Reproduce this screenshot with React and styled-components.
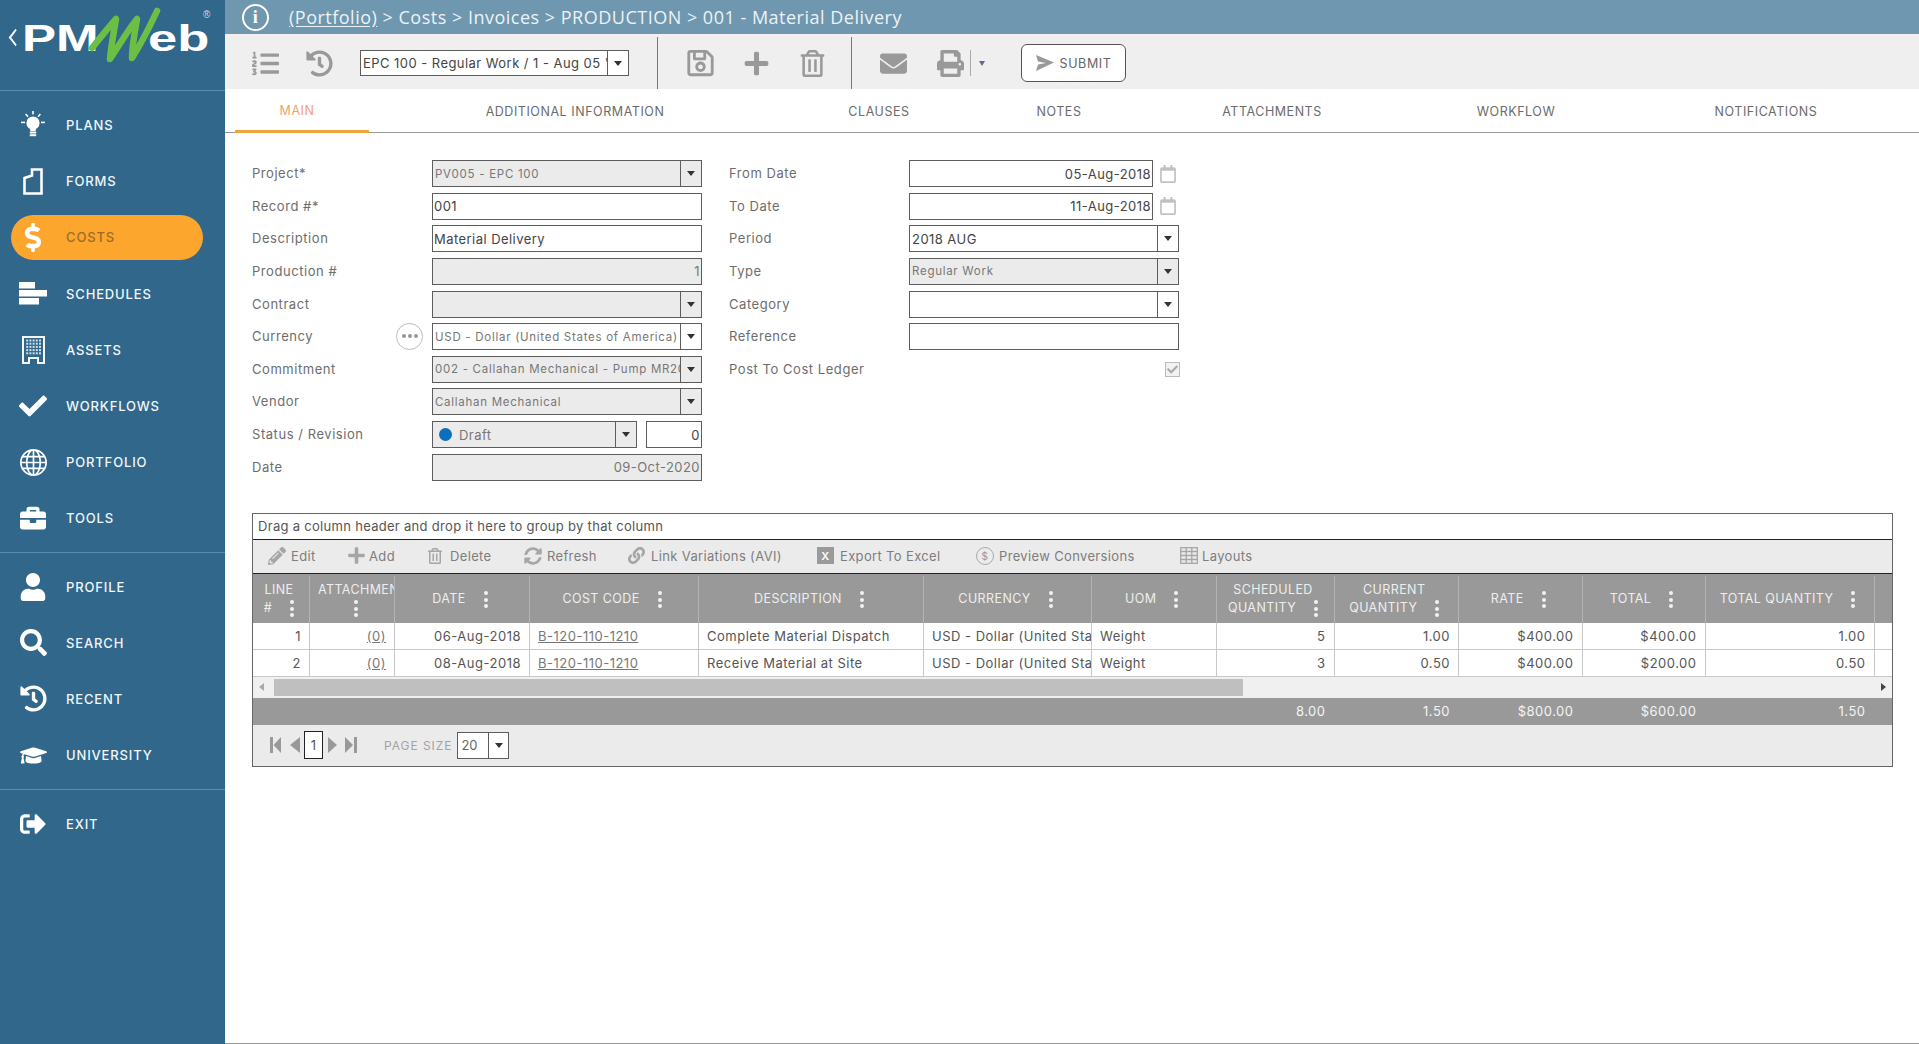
import React from "react";
import styled, { createGlobalStyle } from "styled-components";
import {
  FaCheck,
  FaDollarSign,
  FaBriefcase,
  FaUser,
  FaSearch,
  FaHistory,
  FaGraduationCap,
  FaSignOutAlt,
  FaListOl,
  FaRegSave,
  FaPlus,
  FaRegTrashAlt,
  FaEnvelope,
  FaPrint,
  FaPencilAlt,
  FaSyncAlt,
  FaLink,
  FaRegCalendar,
} from "react-icons/fa";
import { BsGlobe } from "react-icons/bs";

const COLUMNS = "56px 85px 135px 169px 225px 168px 124.5px 118px 124.5px 123.5px 123px 169px 1fr";

const GlobalStyle = createGlobalStyle`
  html, body {
    margin: 0;
    padding: 0;
    height: 100%;
    background: #fff;
    font-family: "Inter", "Noto Sans", sans-serif;
  }
  * {
    box-sizing: border-box;
  }
`;

const Page = styled.div`
  display: flex;
  width: 100%;
  height: 100vh;
  overflow: hidden;
`;

const Sidebar = styled.nav`
  width: 225px;
  flex-shrink: 0;
  background: #30678b;
  color: #fff;
  display: flex;
  flex-direction: column;
`;

const LogoBox = styled.div`
  height: 91px;
  border-bottom: 1px solid #5a8cab;
  position: relative;
`;

const LogoText = styled.div`
  position: absolute;
  top: 14px;
  font-family: "Liberation Sans", sans-serif;
  font-weight: 700;
  font-size: 36px;
  line-height: 50px;
  transform-origin: left center;
  transform: scaleX(${({ $sx }) => $sx});
  left: ${({ $left }) => $left}px;
`;

const LogoChevron = styled.div`
  position: absolute;
  left: 10px;
  top: 32px;
  width: 11px;
  height: 11px;
  border-left: 2px solid #fff;
  border-bottom: 2px solid #fff;
  transform: rotate(45deg) skew(8deg, 8deg);
`;

const LogoMark = styled.svg`
  position: absolute;
  left: 0;
  top: 0;
`;

const Registered = styled.span`
  position: absolute;
  left: 203px;
  top: 9px;
  font-size: 10px;
  font-family: "Liberation Sans", sans-serif;
  color: #cfdde6;
`;

const NavGroup = styled.div`
  padding: ${({ $top }) => $top}px 0 ${({ $bottom }) => $bottom}px;
  border-bottom: ${({ $line }) => ($line ? "1px solid #5a8cab" : "none")};
`;

const NavRow = styled.div`
  height: 56.2px;
  display: flex;
  align-items: center;
`;

const NavItem = styled.a`
  flex: 1;
  height: 45px;
  margin: 0 22px 0 11px;
  padding-left: 8px;
  border-radius: 23px;
  display: flex;
  align-items: center;
  gap: 19px;
  font-size: 13px;
  font-weight: 500;
  letter-spacing: 0.85px;
  color: ${({ $active }) => ($active ? "#9c6b2b" : "#f2f6f9")};
  background: ${({ $active }) => ($active ? "#fda62d" : "transparent")};
`;

const NavIcon = styled.span`
  width: 28px;
  height: 30px;
  display: flex;
  align-items: center;
  justify-content: center;
  color: #fff;
  font-size: ${({ $size }) => $size || 26}px;
`;

const Main = styled.main`
  flex: 1;
  min-width: 0;
  display: flex;
  flex-direction: column;
  border-bottom: 1px solid #999;
`;

const TopBar = styled.header`
  height: 34px;
  background: #6f97af;
  color: #edf2f5;
  display: flex;
  align-items: center;
  padding-left: 17px;
  gap: 20px;
  font-family: "Open Sans", sans-serif;
  font-size: 18px;
  letter-spacing: 0.5px;
`;

const InfoCircle = styled.span`
  width: 27px;
  height: 27px;
  border: 2.5px solid #fff;
  border-radius: 50%;
  color: #fff;
  font-family: "Liberation Serif", serif;
  font-weight: 700;
  font-size: 18px;
  display: flex;
  align-items: center;
  justify-content: center;
`;

const Crumbs = styled.div`
  white-space: nowrap;
  & u {
    text-underline-offset: 2px;
  }
`;

const ToolBar = styled.div`
  height: 55px;
  background: #efefef;
  border-top: 3px solid #f4eeee;
  display: flex;
  align-items: center;
  padding-left: 27px;
`;

const ToolGroup = styled.div`
  display: flex;
  align-items: center;
  gap: ${({ $gap }) => $gap || 29}px;
  padding: 0 ${({ $right }) => $right}px 0 ${({ $left }) => $left}px;
  align-self: stretch;
  border-right: ${({ $line }) => ($line ? "1px solid #777" : "none")};
`;

const ToolIcon = styled.span`
  width: 27px;
  display: flex;
  justify-content: center;
  color: #999;
  font-size: ${({ $size }) => $size || 27}px;
`;

const PlainField = styled.div`
  height: ${({ $h }) => $h || 27}px;
  width: ${({ $w }) => ($w ? `${$w}px` : "100%")};
  border: 1px solid #5d5d5d;
  background: ${({ $off }) => ($off ? "#ebebeb" : "#fff")};
  color: ${({ $off, $soft }) => ($off || $soft ? "#777" : "#444")};
  font-size: ${({ $small }) => ($small ? 11.5 : 13)}px;
  letter-spacing: ${({ $small }) => ($small ? 0.72 : 0.45)}px;
  display: flex;
  align-items: center;
  justify-content: ${({ $right }) => ($right ? "flex-end" : "flex-start")};
  padding: 0 1px;
  white-space: nowrap;
  overflow: hidden;
`;

const FieldText = styled.span`
  flex: 1;
  min-width: 0;
  overflow: hidden;
  display: flex;
  align-items: center;
  padding-left: 1px;
`;

const ArrowBox = styled.span`
  width: 21px;
  height: 100%;
  flex-shrink: 0;
  border-left: 1px solid #5d5d5d;
  display: flex;
  align-items: center;
  justify-content: center;
  margin-right: -1px;
  &::after {
    content: "";
    border-left: 4px solid transparent;
    border-right: 4px solid transparent;
    border-top: 5px solid #333;
  }
`;

const StatusDot = styled.span`
  width: 13px;
  height: 13px;
  border-radius: 50%;
  background: #0a6fbd;
  margin: 0 7px 0 4px;
  flex-shrink: 0;
`;

const SubmitButton = styled.button`
  width: 105px;
  height: 38px;
  margin-left: 36px;
  border: 1px solid #555;
  border-radius: 6px;
  background: #fff;
  color: #666;
  font-family: inherit;
  font-size: 12.5px;
  letter-spacing: 0.6px;
  display: flex;
  align-items: center;
  justify-content: center;
  gap: 6px;
`;

const DropTick = styled.span`
  margin-left: 6px;
  padding-left: 8px;
  height: 26px;
  border-left: 1px solid #aaa;
  display: flex;
  align-items: center;
  &::after {
    content: "";
    border-left: 3.5px solid transparent;
    border-right: 3.5px solid transparent;
    border-top: 5px solid #5a6a9a;
  }
`;

const Tabs = styled.div`
  height: 44px;
  display: flex;
  padding-left: 10px;
  border-bottom: 1px solid #999;
`;

const Tab = styled.div`
  width: ${({ $w }) => $w}px;
  height: 44px;
  display: flex;
  align-items: center;
  justify-content: center;
  padding-right: ${({ $active }) => ($active ? 10 : 0)}px;
  padding-top: ${({ $active }) => ($active ? 2 : 0)}px;
  font-size: 12.5px;
  letter-spacing: 0.55px;
  color: ${({ $active }) => ($active ? "#ef9f72" : "#6b6b6b")};
  border-bottom: ${({ $active }) => ($active ? "3px solid #f2a33c" : "none")};
`;

const Content = styled.div`
  flex: 1;
  padding: 27px 26px 0 27px;
`;

const Form = styled.div`
  display: flex;
  gap: 27px;
`;

const FormColumn = styled.div`
  display: grid;
  grid-template-columns: 180px 270px;
  grid-auto-rows: 27px;
  row-gap: 5.65px;
  align-content: start;
`;

const Label = styled.div`
  font-size: 13px;
  letter-spacing: 0.55px;
  color: #6d6d6d;
  padding-bottom: 1px;
  display: flex;
  align-items: center;
  justify-content: space-between;
`;

const MoreButton = styled.span`
  width: 27px;
  height: 27px;
  margin-right: 9px;
  border: 1.5px solid #bbb;
  border-radius: 50%;
  display: flex;
  align-items: center;
  justify-content: center;
  gap: 2px;
  & i {
    width: 4px;
    height: 4px;
    border-radius: 50%;
    background: #999;
  }
`;

const SplitCell = styled.div`
  display: flex;
  justify-content: space-between;
`;

const DateCell = styled.div`
  display: flex;
  justify-content: space-between;
  align-items: center;
  padding-right: 2px;
  color: #c2c2c2;
  font-size: 18px;
`;

const CheckBox = styled.span`
  width: 15px;
  height: 15px;
  margin-right: -1px;
  border: 1px solid #bbb;
  background: #f2f2f2;
  color: #aaa;
  font-size: 11px;
  display: flex;
  align-items: center;
  justify-content: center;
`;

const CheckCell = styled.div`
  display: flex;
  align-items: center;
  justify-content: flex-end;
`;

const DataGrid = styled.section`
  margin-top: 32px;
  border: 1px solid #666;
  background: #ebebeb;
`;

const GroupBar = styled.div`
  height: 26px;
  background: #fff;
  border-bottom: 1px solid #222;
  padding-left: 5px;
  display: flex;
  align-items: center;
  font-size: 13px;
  letter-spacing: 0.3px;
  color: #555;
`;

const GridTools = styled.div`
  height: 34px;
  padding: 0 0 1px 15px;
  border-bottom: 1px solid #222;
  display: flex;
  align-items: center;
`;

const GridTool = styled.div`
  width: ${({ $w }) => $w}px;
  display: flex;
  align-items: center;
  gap: ${({ $gap }) => $gap}px;
  color: #7d7d7d;
  font-size: 13px;
  letter-spacing: 0.35px;
  white-space: nowrap;
`;

const GridToolIcon = styled.span`
  display: flex;
  align-items: center;
  color: #a6a6a6;
  font-size: ${({ $size }) => $size || 16}px;
`;

const ExcelBadge = styled.span`
  width: 17px;
  height: 17px;
  background: #9a9a9a;
  color: #fff;
  font-size: 11px;
  font-weight: 600;
  display: flex;
  align-items: center;
  justify-content: center;
`;

const CoinBadge = styled.span`
  width: 18px;
  height: 18px;
  border: 1.5px solid #aaa;
  border-radius: 50%;
  color: #999;
  font-size: 10px;
  display: flex;
  align-items: center;
  justify-content: center;
`;

const HeadRow = styled.div`
  display: grid;
  grid-template-columns: ${COLUMNS};
  height: 49px;
  background: #999;
  color: #eee;
  font-size: 12.5px;
  letter-spacing: 0.4px;
`;

const HeadCell = styled.div`
  border-left: ${({ $first }) => ($first ? "none" : "1px solid #b3b3b3")};
  margin-top: 2px;
  line-height: 18px;
  text-align: center;
  padding: 0 ${({ $clip }) => ($clip ? 0 : 4)}px 0 ${({ $clip }) => ($clip ? 8 : 0)}px;
  display: flex;
  flex-direction: column;
  justify-content: center;
  overflow: hidden;
  white-space: nowrap;
`;

const ClipLine = styled.div`
  text-align: left;
  overflow: hidden;
`;

const Kebab = styled.span`
  display: inline-flex;
  flex-direction: column;
  gap: 2.5px;
  margin-left: ${({ $solo }) => ($solo ? 0 : 18)}px;
  vertical-align: middle;
  & i {
    width: 4px;
    height: 4px;
    border-radius: 50%;
    background: #f2f2f2;
  }
`;

const BodyRow = styled.div`
  display: grid;
  grid-template-columns: ${COLUMNS};
  height: 27px;
  background: #fff;
  border-bottom: 1px solid #c8c8c8;
  color: #555;
  font-size: 13px;
  letter-spacing: 0.5px;
`;

const BodyCell = styled.div`
  border-left: ${({ $first }) => ($first ? "none" : "1px solid #c8c8c8")};
  display: flex;
  align-items: center;
  justify-content: ${({ $right }) => ($right ? "flex-end" : "flex-start")};
  padding: 0 ${({ $right }) => ($right ? 8 : 0)}px 0 ${({ $right }) => ($right ? 0 : 8)}px;
  overflow: hidden;
  white-space: nowrap;
  & u {
    color: #777;
  }
`;

const ScrollRow = styled.div`
  height: 21px;
  background: #f0f0f0;
  display: flex;
  align-items: center;
  padding: 0 6px;
`;

const ScrollArrow = styled.span`
  width: 0;
  height: 0;
  border-top: 4px solid transparent;
  border-bottom: 4px solid transparent;
  border-left: ${({ $dir }) => ($dir === "right" ? "5px solid #444" : "none")};
  border-right: ${({ $dir }) => ($dir === "left" ? "5px solid #aaa" : "none")};
`;

const ScrollThumb = styled.span`
  width: 969px;
  height: 17px;
  margin: 0 auto 0 10px;
  background: #bfbfbf;
`;

const SumRow = styled.div`
  display: grid;
  grid-template-columns: ${COLUMNS};
  height: 27px;
  background: #999;
  color: #f4f4f4;
  font-size: 13px;
  letter-spacing: 0.5px;
`;

const SumCell = styled.div`
  display: flex;
  align-items: center;
  justify-content: flex-end;
  padding-right: 8px;
`;

const Pager = styled.div`
  height: 41px;
  display: flex;
  align-items: center;
  padding-left: 17px;
  color: #888;
`;

const PagerIcon = styled.svg`
  display: block;
  margin-right: ${({ $gap }) => $gap}px;
`;

const PageBox = styled.span`
  width: 19px;
  height: 28px;
  margin-right: 5px;
  border: 1px solid #222;
  background: #fff;
  color: #555;
  font-size: 13px;
  display: flex;
  align-items: center;
  justify-content: center;
`;

const PageSizeLabel = styled.span`
  margin: 0 5px 0 27px;
  font-size: 12px;
  letter-spacing: 0.95px;
  color: #a3a3a3;
  white-space: nowrap;
`;

const PageSize = styled.div`
  width: 52px;
  height: 27px;
  border: 1px solid #5d5d5d;
  background: #fff;
  color: #666;
  font-size: 13px;
  display: flex;
  align-items: center;
  padding-left: 2px;
`;

const Bulb = () => (
  <svg width="30" height="32" viewBox="0 0 28 30" fill="#fff">
    <circle cx="14" cy="13" r="6.6" />
    <path d="M10.5 17h7l-1 4h-5z" />
    <rect x="10.8" y="21.5" width="6.4" height="2" />
    <rect x="10.8" y="24.2" width="6.4" height="2" />
    <rect x="13.2" y="1" width="1.6" height="3.4" />
    <rect x="2" y="11.6" width="4" height="1.6" />
    <rect x="22" y="11.6" width="4" height="1.6" />
    <path d="M6 4.5l1.2-1 2.4 2.8-1.2 1zM22 4.5l-1.2-1-2.4 2.8 1.2 1z" />
  </svg>
);

const FormsIcon = () => (
  <svg width="20" height="27" viewBox="0 0 20 27" fill="none" stroke="#fff" strokeWidth="2.6">
    <path d="M1.500 25.500V10L9 7.500V1.500h9.500v24z" />
  </svg>
);

const SchedulesIcon = () => (
  <svg width="28" height="23" viewBox="0 0 28 23" fill="#fff">
    <rect x="0" y="0" width="16" height="6.5" />
    <rect x="0" y="8" width="28" height="6.5" />
    <rect x="0" y="16" width="20" height="6.5" />
  </svg>
);

const AssetsIcon = () => {
  const windows = [];
  for (let r = 0; r < 5; r++) {
    for (let c = 0; c < 5; c++) {
      windows.push(<rect key={`${r}-${c}`} x={4.2 + c * 3.2} y={3.5 + r * 3.2} width="2" height="2" />);
    }
  }
  return (
    <svg width="23" height="28" viewBox="0 0 23 28" fill="#fff">
      <path d="M0 0h23v28h-8v-5H8v5H0zM2 2v24h4v-5h11v5h4V2z" opacity="0.95" />
      <g fill="#cfe0ea">{windows}</g>
    </svg>
  );
};

const SubmitArrow = () => (
  <svg width="18" height="16" viewBox="0 0 18 16" fill="#999">
    <path d="M0 0l18 7.500L0 16l2-6.500 8-1.500-8-1.500z" />
  </svg>
);

const LayoutsIcon = () => (
  <svg width="18" height="17" viewBox="0 0 18 17" fill="none" stroke="#a6a6a6" strokeWidth="1.3">
    <rect x="0.7" y="0.7" width="16.6" height="15.6" />
    <path d="M0.700 4.500h16.600M0.700 8.500h16.600M0.700 12.500h16.600M6.200 0.700v15.600M11.800 0.700v15.600" />
  </svg>
);

const PagerFirst = () => (
  <PagerIcon $gap={8} width="11" height="16" viewBox="0 0 11 16" fill="#999">
    <rect width="3" height="16" />
    <path d="M11 0v16L3.500 8z" />
  </PagerIcon>
);
const PagerPrev = () => (
  <PagerIcon $gap={4} width="11" height="16" viewBox="0 0 11 16" fill="#999">
    <path d="M11 0v16L1 8z" />
  </PagerIcon>
);
const PagerNext = () => (
  <PagerIcon $gap={8} width="9" height="16" viewBox="0 0 9 16" fill="#999">
    <path d="M0 0v16l9-8z" />
  </PagerIcon>
);
const PagerLast = () => (
  <PagerIcon $gap={0} width="12" height="16" viewBox="0 0 12 16" fill="#999">
    <rect x="9" width="3" height="16" />
    <path d="M0 0v16l8-8z" />
  </PagerIcon>
);

const Kebabs = ({ solo }) => (
  <Kebab $solo={solo}>
    <i />
    <i />
    <i />
  </Kebab>
);

const navTop = [
  { label: "PLANS", icon: <Bulb /> },
  { label: "FORMS", icon: <FormsIcon /> },
  { label: "COSTS", icon: <FaDollarSign />, active: true, size: 29 },
  { label: "SCHEDULES", icon: <SchedulesIcon /> },
  { label: "ASSETS", icon: <AssetsIcon /> },
  { label: "WORKFLOWS", icon: <FaCheck />, size: 28 },
  { label: "PORTFOLIO", icon: <BsGlobe />, size: 27 },
  { label: "TOOLS", icon: <FaBriefcase /> },
];

const navMiddle = [
  { label: "PROFILE", icon: <FaUser />, size: 28 },
  { label: "SEARCH", icon: <FaSearch />, size: 27 },
  { label: "RECENT", icon: <FaHistory />, size: 27 },
  { label: "UNIVERSITY", icon: <FaGraduationCap />, size: 27 },
];

const tabs = [
  { label: "MAIN", w: 134, active: true },
  { label: "ADDITIONAL INFORMATION", w: 412 },
  { label: "CLAUSES", w: 196 },
  { label: "NOTES", w: 164 },
  { label: "ATTACHMENTS", w: 262 },
  { label: "WORKFLOW", w: 226 },
  { label: "NOTIFICATIONS", w: 274 },
];

const gridTools = [
  { label: "Edit", w: 79, gap: 5, icon: <FaPencilAlt />, size: 18 },
  { label: "Add", w: 80, gap: 3, icon: <FaPlus />, size: 19 },
  { label: "Delete", w: 97, gap: 7, icon: <FaRegTrashAlt /> },
  { label: "Refresh", w: 104, gap: 5, icon: <FaSyncAlt />, size: 18 },
  { label: "Link Variations (AVI)", w: 189, gap: 6, icon: <FaLink />, size: 17 },
  { label: "Export To Excel", w: 159, gap: 6, icon: <ExcelBadge>X</ExcelBadge> },
  { label: "Preview Conversions", w: 204, gap: 5, icon: <CoinBadge>$</CoinBadge> },
  { label: "Layouts", w: 100, gap: 4, icon: <LayoutsIcon /> },
];

const headers = [
  { lines: ["LINE", "#"], first: true },
  { lines: ["ATTACHMENTS", ""], clip: true },
  { lines: ["DATE"] },
  { lines: ["COST CODE"] },
  { lines: ["DESCRIPTION"] },
  { lines: ["CURRENCY"] },
  { lines: ["UOM"] },
  { lines: ["SCHEDULED", "QUANTITY"] },
  { lines: ["CURRENT", "QUANTITY"] },
  { lines: ["RATE"] },
  { lines: ["TOTAL"] },
  { lines: ["TOTAL QUANTITY"] },
  { lines: [""], empty: true },
];

const rows = [
  ["1", "06-Aug-2018", "Complete Material Dispatch", "5", "1.00", "$400.00", "$400.00", "1.00"],
  ["2", "08-Aug-2018", "Receive Material at Site", "3", "0.50", "$400.00", "$200.00", "0.50"],
];

const leftForm = [
  { label: "Project*", value: "PV005 - EPC 100", select: true, off: true, small: true },
  { label: "Record #*", value: "001" },
  { label: "Description", value: "Material Delivery" },
  { label: "Production #", value: "1", off: true, right: true },
  { label: "Contract", value: "", select: true, off: true },
  { label: "Currency", value: "USD - Dollar (United States of America)", select: true, soft: true, small: true, more: true },
  { label: "Commitment", value: "002 - Callahan Mechanical - Pump MR2018", select: true, off: true, small: true },
  { label: "Vendor", value: "Callahan Mechanical", select: true, off: true, small: true },
];

const rightForm = [
  { label: "Period", value: "2018 AUG", select: true },
  { label: "Type", value: "Regular Work", select: true, off: true, small: true },
  { label: "Category", value: "", select: true },
  { label: "Reference", value: "" },
];

const Field = ({ value, select, off, soft, small, right }) => (
  <PlainField $off={off} $soft={soft} $small={small} $right={right}>
    {select ? (
      <>
        <FieldText>{value}</FieldText>
        <ArrowBox />
      </>
    ) : (
      value
    )}
  </PlainField>
);

const DateField = ({ value }) => (
  <DateCell>
    <PlainField $w={244} $right>
      {value}
    </PlainField>
    <FaRegCalendar />
  </DateCell>
);

const App = () => {
  return (
    <>
      <GlobalStyle />
      <Page>
        <Sidebar>
          <LogoBox>
            <LogoChevron />
            <LogoText $left={22} $sx={1.42}>PM</LogoText>
            <LogoText $left={148} $sx={1.46}>eb</LogoText>
            <LogoMark width="225" height="91" viewBox="0 0 225 91" fill="none">
              <path
                d="M92 48C100 38 108 28 116 19C114 32 111 46 110 59C120 44 128 30 137 19C135 32 132 45 132 58C141 44 150 26 157 11"
                stroke="#6cbf45"
                strokeWidth="6.5"
                strokeLinejoin="round"
                strokeLinecap="round"
              />
            </LogoMark>
            <Registered>®</Registered>
          </LogoBox>
          <NavGroup $top={6} $bottom={5} $line>
            {navTop.map((item) => (
              <NavRow key={item.label}>
                <NavItem $active={item.active}>
                  <NavIcon $size={item.size}>{item.icon}</NavIcon>
                  {item.label}
                </NavItem>
              </NavRow>
            ))}
          </NavGroup>
          <NavGroup $top={6} $bottom={6} $line>
            {navMiddle.map((item) => (
              <NavRow key={item.label}>
                <NavItem>
                  <NavIcon $size={item.size}>{item.icon}</NavIcon>
                  {item.label}
                </NavItem>
              </NavRow>
            ))}
          </NavGroup>
          <NavGroup $top={6} $bottom={0}>
            <NavRow>
              <NavItem>
                <NavIcon>
                  <FaSignOutAlt />
                </NavIcon>
                EXIT
              </NavItem>
            </NavRow>
          </NavGroup>
        </Sidebar>

        <Main>
          <TopBar>
            <InfoCircle>i</InfoCircle>
            <Crumbs>
              <u>(Portfolio)</u> &gt; Costs &gt; Invoices &gt; PRODUCTION &gt; 001 - Material Delivery
            </Crumbs>
          </TopBar>

          <ToolBar>
            <ToolGroup $left={0} $right={28} $gap={27} $line>
              <ToolIcon><FaListOl /></ToolIcon>
              <ToolIcon><FaHistory /></ToolIcon>
              <PlainField $w={269} $h={26}>
                <FieldText>EPC 100 - Regular Work / 1 - Aug 05 '18</FieldText>
                <ArrowBox />
              </PlainField>
            </ToolGroup>
            <ToolGroup $left={29} $right={25} $line>
              <ToolIcon $size={30}><FaRegSave /></ToolIcon>
              <ToolIcon><FaPlus /></ToolIcon>
              <ToolIcon><FaRegTrashAlt /></ToolIcon>
            </ToolGroup>
            <ToolGroup $left={28} $right={0} $gap={30}>
              <ToolIcon><FaEnvelope /></ToolIcon>
              <ToolIcon><FaPrint /></ToolIcon>
            </ToolGroup>
            <DropTick />
            <SubmitButton>
              <SubmitArrow />
              SUBMIT
            </SubmitButton>
          </ToolBar>

          <Tabs>
            {tabs.map((tab) => (
              <Tab key={tab.label} $w={tab.w} $active={tab.active}>
                {tab.label}
              </Tab>
            ))}
          </Tabs>

          <Content>
            <Form>
              <FormColumn>
                {leftForm.map((row) => (
                  <React.Fragment key={row.label}>
                    <Label>
                      {row.label}
                      {row.more && (
                        <MoreButton>
                          <i />
                          <i />
                          <i />
                        </MoreButton>
                      )}
                    </Label>
                    <Field {...row} />
                  </React.Fragment>
                ))}
                <Label>Status / Revision</Label>
                <SplitCell>
                  <PlainField $w={205} $off>
                    <FieldText>
                      <StatusDot />
                      Draft
                    </FieldText>
                    <ArrowBox />
                  </PlainField>
                  <PlainField $w={56} $right>0</PlainField>
                </SplitCell>
                <Label>Date</Label>
                <Field value="09-Oct-2020" off right />
              </FormColumn>

              <FormColumn>
                <Label>From Date</Label>
                <DateField value="05-Aug-2018" />
                <Label>To Date</Label>
                <DateField value="11-Aug-2018" />
                {rightForm.map((row) => (
                  <React.Fragment key={row.label}>
                    <Label>{row.label}</Label>
                    <Field {...row} />
                  </React.Fragment>
                ))}
                <Label>Post To Cost Ledger</Label>
                <CheckCell>
                  <CheckBox>
                    <FaCheck />
                  </CheckBox>
                </CheckCell>
              </FormColumn>
            </Form>

            <DataGrid>
              <GroupBar>Drag a column header and drop it here to group by that column</GroupBar>
              <GridTools>
                {gridTools.map((tool) => (
                  <GridTool key={tool.label} $w={tool.w} $gap={tool.gap}>
                    <GridToolIcon $size={tool.size}>{tool.icon}</GridToolIcon>
                    {tool.label}
                  </GridTool>
                ))}
              </GridTools>

              <HeadRow>
                {headers.map((head, i) => (
                  <HeadCell key={i} $first={head.first} $clip={head.clip}>
                    {head.empty ? null : head.lines.length === 1 ? (
                      <div>
                        {head.lines[0]}
                        <Kebabs />
                      </div>
                    ) : (
                      <>
                        {head.clip ? <ClipLine>{head.lines[0]}</ClipLine> : <div>{head.lines[0]}</div>}
                        <div>
                          {head.lines[1]}
                          <Kebabs solo={!head.lines[1]} />
                        </div>
                      </>
                    )}
                  </HeadCell>
                ))}
              </HeadRow>

              {rows.map((row) => (
                <BodyRow key={row[0]}>
                  <BodyCell $first $right>{row[0]}</BodyCell>
                  <BodyCell $right><u>(0)</u></BodyCell>
                  <BodyCell $right>{row[1]}</BodyCell>
                  <BodyCell><u>B-120-110-1210</u></BodyCell>
                  <BodyCell>{row[2]}</BodyCell>
                  <BodyCell>USD - Dollar (United States of America)</BodyCell>
                  <BodyCell>Weight</BodyCell>
                  <BodyCell $right>{row[3]}</BodyCell>
                  <BodyCell $right>{row[4]}</BodyCell>
                  <BodyCell $right>{row[5]}</BodyCell>
                  <BodyCell $right>{row[6]}</BodyCell>
                  <BodyCell $right>{row[7]}</BodyCell>
                  <BodyCell />
                </BodyRow>
              ))}

              <ScrollRow>
                <ScrollArrow $dir="left" />
                <ScrollThumb />
                <ScrollArrow $dir="right" />
              </ScrollRow>

              <SumRow>
                <SumCell />
                <SumCell />
                <SumCell />
                <SumCell />
                <SumCell />
                <SumCell />
                <SumCell />
                <SumCell>8.00</SumCell>
                <SumCell>1.50</SumCell>
                <SumCell>$800.00</SumCell>
                <SumCell>$600.00</SumCell>
                <SumCell>1.50</SumCell>
                <SumCell />
              </SumRow>

              <Pager>
                <PagerFirst />
                <PagerPrev />
                <PageBox>1</PageBox>
                <PagerNext />
                <PagerLast />
                <PageSizeLabel>PAGE SIZE</PageSizeLabel>
                <PageSize>
                  <FieldText>20</FieldText>
                  <ArrowBox />
                </PageSize>
              </Pager>
            </DataGrid>
          </Content>
        </Main>
      </Page>
    </>
  );
};

export default App;
